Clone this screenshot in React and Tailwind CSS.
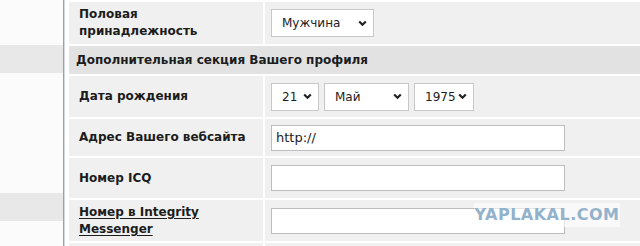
function Chevron() {
  return (
    <svg width="9" height="7" viewBox="0 0 9 7" className="shrink-0">
      <polyline points="1.2,1.5 4.5,4.8 7.8,1.5" fill="none" stroke="#222" strokeWidth="2.2" />
    </svg>
  )
}

function Select({ value, width }) {
  return (
    <div
      className="flex items-center justify-between h-[28px] pl-[10px] pr-[6px] bg-white border border-[#c8c8c8] text-[12px] text-[#222]"
      style={{ width }}
    >
      <span>{value}</span>
      <Chevron />
    </div>
  )
}

function TextInput({ value = '' }) {
  return (
    <div className="flex items-center w-[294px] h-[26px] px-[4px] bg-white border border-[#bdbdbd] text-[13px] text-[#222]">
      {value}
    </div>
  )
}

function Row({ label, height, underline, children }) {
  return (
    <>
      <div className="flex items-center pl-[10px] bg-[#f0f0f0] font-bold text-[12px] leading-[17px]" style={{ height }}>
        <span className={underline ? 'underline underline-offset-2' : ''}>{label}</span>
      </div>
      <div className="flex items-center gap-[5px] pl-[6px] bg-[#f0f0f0]" style={{ height }}>
        {children}
      </div>
    </>
  )
}

export default function App() {
  return (
    <div
      className="relative flex w-[640px] h-[246px] overflow-hidden bg-white text-[13px] text-[#1c1c1c]"
      style={{ fontFamily: '"DejaVu Sans", Verdana, sans-serif' }}
    >
      <div className="flex flex-col w-[63px] shrink-0 bg-[#fbfbfb]">
        <div className="h-[45px]" />
        <div className="h-[28px] bg-[#e8e8e8]" />
        <div className="h-[120px]" />
        <div className="h-[28px] bg-[#e8e8e8]" />
      </div>
      <div className="w-px bg-[#98a1b3]" />
      <div className="w-px bg-[#d4d8e0]" />
      <div className="w-[4px]" />

      <div className="flex-1 pt-[2px] bg-white">
        <div className="grid grid-cols-[194px_1fr] gap-[2px]">
          <Row label={<>Половая<br />принадлежность</>} height={42}>
            <Select value="Мужчина" width={103} />
          </Row>
          <div className="col-span-2 flex items-center h-[28px] pl-[7px] bg-[#e2e2e2] font-bold text-[12px]">
            Дополнительная секция Вашего профиля
          </div>
          <Row label="Дата рождения" height={41}>
            <Select value="21" width={48} />
            <Select value="Май" width={85} />
            <Select value="1975" width={60} />
          </Row>
          <Row label="Адрес Вашего вебсайта" height={37}>
            <TextInput value="http://" />
          </Row>
          <Row label="Номер ICQ" height={40}>
            <TextInput />
          </Row>
          <Row label={<>Номер в Integrity<br />Messenger</>} height={41} underline>
            <TextInput />
          </Row>
          <div className="h-[10px] bg-[#f0f0f0]" />
          <div className="h-[10px] bg-[#f0f0f0]" />
        </div>
      </div>

      <div className="absolute left-[474px] top-[203px] w-[146px] h-[24px] flex items-center justify-center bg-white/60">
        <span className="text-[16px] font-bold tracking-[0.5px] text-[#93b2cc]">YAPLAKAL.COM</span>
      </div>
    </div>
  )
}
